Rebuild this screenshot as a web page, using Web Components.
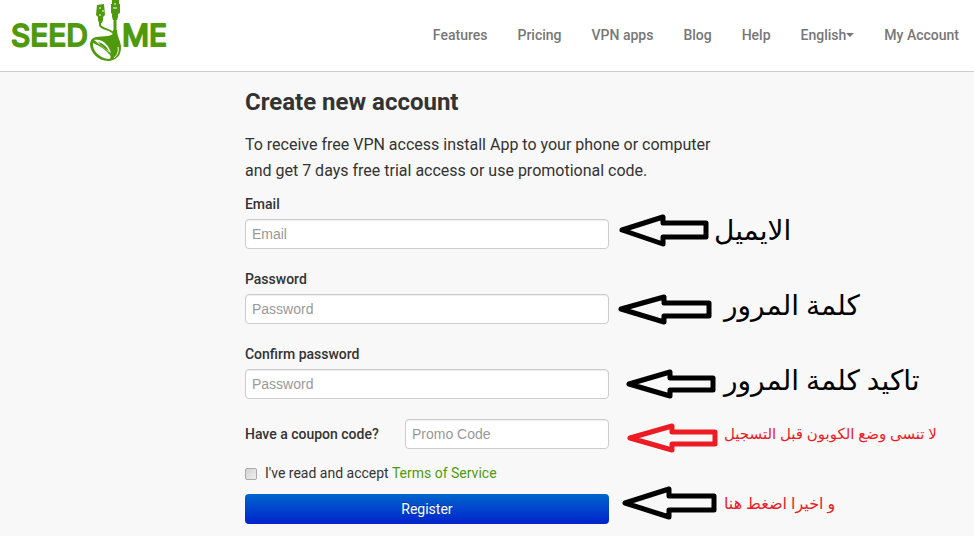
<!DOCTYPE html>
<html lang="en">
<head>
<meta charset="utf-8">
<title>Create new account</title>
<style>
body { margin: 0; min-height: 100vh; background: #f8f8f8; color: #333; font-family: Roboto, sans-serif; font-size: 14px; line-height: 20px; }
</style>
</head>
<body>
<site-header></site-header>
<register-form></register-form>
<script>
class BaseElement extends HTMLElement {
  connectedCallback() {
    if (!this.shadowRoot) this.attachShadow({ mode: 'open', delegatesFocus: true }).innerHTML = this.view();
  }
}

customElements.define('site-logo', class extends BaseElement {
  view() {
    return `<style>
:host { display: block; }
a { display: block; }
svg { display: block; }
text { font: 400 30px Inter, sans-serif; fill: #4f9a0c; stroke: #4f9a0c; stroke-width: 2; stroke-linejoin: round; }
</style>
<a href="#" aria-label="Seed4.Me home"><svg width="180" height="66" viewBox="0 0 180 66">
<text x="11" y="46">SEED</text><text x="122" y="46">ME</text>
<g fill="#4f9a0c">
<path d="M97 5l7-1 1 11-2 2v3l-1 3h-3l-1-3v-3l-2-2z"/>
<path d="M112 0h7v4h1v9l-2 1v3l-1 3h-4l-1-3v-3l-1-1V4h1z"/>
<path d="M92 39C96 35 107 38 113 34V30h4c0 7 4 11 4 18 0 8-6 13-13 13-10 0-18-9-18-17 0-2 1-4 2-5z"/>
</g>
<path d="M93 43c-1 8 7 15 15 16 3 0 3-2 2-4-4-5-10-9-17-12z" fill="#fff"/>
<path d="M94 40c8-2 15 5 17 13-5-3-12-9-17-13z" fill="#fff"/>
<path d="M98 42c5 1 9 5 11 9-4-2-8-5-11-9z" fill="#4f9a0c"/>
<path d="M118 47c1 5-1 8-4 11" fill="none" stroke="#fff"/>
<g fill="none" stroke="#4f9a0c" stroke-width="2"><path d="M100 22v3c1 5 14 4 14 10"/><path d="M115 19v18" stroke-width="3"/></g>
<path d="M99 8h2m1 3h2m-5 4h2M114 4h2m-3 4h4" stroke="#fff" stroke-width="1"/>
</svg></a>`;
  }
});

customElements.define('nav-link', class extends BaseElement {
  view() {
    return `<style>
:host { display: block; }
a { display: flex; align-items: center; color: #777; text-decoration: none; font-weight: 500; white-space: nowrap; }
i { border: 4px solid transparent; border-top-color: #777; border-bottom: 0; }
</style><a href="#"><slot></slot>${this.hasAttribute('menu') ? '<i></i>' : ''}</a>`;
  }
});

customElements.define('site-header', class extends BaseElement {
  view() {
    return `<style>
:host { display: block; background: #fff; border-bottom: 1px solid #ccc; }
header { display: flex; justify-content: space-between; height: 71px; }
nav { display: flex; gap: 30px; padding: 25px 15px 0 0; }
</style>
<header><site-logo></site-logo>
<nav><nav-link>Features</nav-link><nav-link>Pricing</nav-link><nav-link>VPN apps</nav-link><nav-link>Blog</nav-link><nav-link>Help</nav-link><nav-link menu>English</nav-link><nav-link>My Account</nav-link></nav></header>`;
  }
});

customElements.define('form-field', class extends BaseElement {
  view() {
    const type = this.getAttribute('type') || 'text';
    return `<style>
:host { display: block; }
.field { display: grid; gap: 5px; }
:host([inline]) .field { grid-template-columns: 1fr 204px; align-items: center; }
label { font-weight: 500; }
input { box-sizing: border-box; width: 100%; height: 30px; margin: 0; padding: 4px 6px; border: 1px solid #ccc; border-radius: 4px; background: #fff; color: #555; font: 14px/20px "Liberation Sans", sans-serif; box-shadow: inset 0 1px 1px rgba(0,0,0,.075); }
input::placeholder { color: #999; opacity: 1; }
</style><div class="field"><label for="i"><slot></slot></label><input id="i" type="${type}" placeholder="${this.getAttribute('hint')}"></div>`;
  }
});

customElements.define('arrow-note', class extends BaseElement {
  view() {
    const w = this.getAttribute('arrow-width') || 106;
    return `<style>
:host { display: flex; align-items: center; color: #000; height: 36px; font: 28px/36px "Liberation Serif", "DejaVu Sans", serif; white-space: nowrap; }
:host([small]) { color: #ed1c24; height: 30px; font-size: 15px; }
:host([small]:not([red])) { align-items: flex-start; font-size: 16px; line-height: 20px; }
svg { flex: none; overflow: visible; fill: none; stroke: #000; stroke-width: 5; stroke-linejoin: round; }
:host([red]) svg { stroke: #ed1c24; }
</style><svg width="${w}" height="36" viewBox="0 0 ${w} 36" aria-hidden="true"><path d="${this.getAttribute('shape')}"/></svg><span dir="rtl" lang="ar"><slot></slot></span>`;
  }
});

customElements.define('terms-check', class extends BaseElement {
  view() {
    return `<style>
:host { display: flex; align-items: center; gap: 7px; }
input { appearance: none; box-sizing: border-box; width: 12px; height: 12px; margin: 2px 1px 0 0; border: 1px solid #aaa; border-radius: 2px; background: linear-gradient(135deg, #d4d4d4, #eee); }
input:checked { background: #4f9a0c; }
a { color: #4f9a0c; text-decoration: none; }
</style><input type="checkbox" id="t"><span><label for="t">I've read and accept</label> <a href="#">Terms of Service</a></span>`;
  }
});

customElements.define('register-button', class extends BaseElement {
  view() {
    return `<style>
:host { display: block; }
button { display: block; width: 100%; height: 30px; padding: 4px 12px; border: 0; border-radius: 4px; color: #fff; background: linear-gradient(#06c, #02c); font: 14px/20px Roboto, sans-serif; text-shadow: 0 -1px 0 rgba(0,0,0,.25); }
</style><button type="submit"><slot></slot></button>`;
  }
});

customElements.define('register-form', class extends BaseElement {
  view() {
    return `<style>
:host { display: block; padding: 10px 0 12px 25.15%; }
h1 { margin: 0 0 10px; font-size: 24px; line-height: 40px; font-weight: 700; }
p { margin: 0 0 10px; max-width: 480px; font-size: 16px; line-height: 26px; }
form { display: grid; grid-template-columns: 364px 1fr; column-gap: 9px; align-items: end; }
form-field { margin-bottom: 20px; }
arrow-note { margin-bottom: 20px; }
terms-check { grid-column: 1 / -1; margin: -6px 0 11px; }
register-button, .last { margin-bottom: 0; }
</style>
<h1>Create new account</h1>
<p>To receive free VPN access install App to your phone or computer and get 7 days free trial access or use promotional code.</p>
<form>
<form-field type="email" hint="Email">Email</form-field>
<arrow-note arrow-width="96" shape="M4 17L45 4V10H88V24H45V31Z">الايميل</arrow-note>
<form-field type="password" hint="Password">Password</form-field>
<arrow-note shape="M3 21L46 9V15H91V28H46V34Z">كلمة المرور</arrow-note>
<form-field type="password" hint="Password">Confirm password</form-field>
<arrow-note shape="M11 21L52 9V15H95V27H52V33Z">تاكيد كلمة المرور</arrow-note>
<form-field inline hint="Promo Code">Have a coupon code?</form-field>
<arrow-note small red shape="M12 22L54 10V16H97V28H54V34Z">لا تنسى وضع الكوبون قبل التسجيل</arrow-note>
<terms-check></terms-check>
<register-button>Register</register-button>
<arrow-note small class="last" shape="M7 9L51 -5V2H96V16H51V23Z">و اخيرا اضغط هنا</arrow-note>
</form>`;
  }
});
</script>
</body>
</html>
